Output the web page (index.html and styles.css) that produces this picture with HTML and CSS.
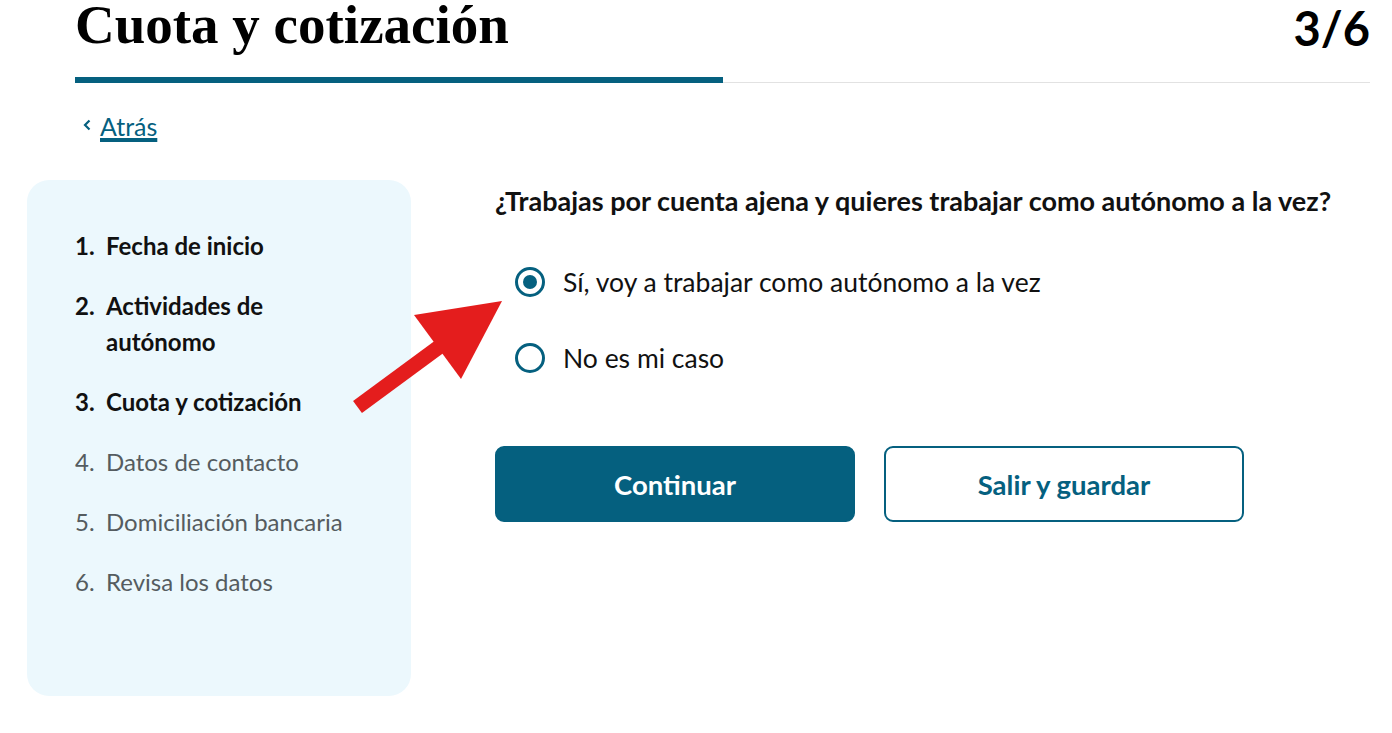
FILE: index.html
```html
<!DOCTYPE html>
<html lang="es">
<head>
    <meta charset="UTF-8">
    <meta name="viewport" content="width=device-width, initial-scale=1.0">
    <title>Cuota y cotización</title>
    <link rel="stylesheet" href="styles.css">
</head>
<body>
    <div class="page">
        <div class="heading">
            <div class="heading_row">
                <h1 class="title">Cuota y cotización</h1>
                <span class="step_count">3/6</span>
            </div>
            <div class="progress">
                <div class="progress_done"></div>
            </div>
        </div>

        <a href="#" class="back">
            <svg class="back_icon" viewBox="0 0 8 12" width="8" height="12">
                <path d="M6.5 1.5 L2 6 L6.5 10.5" fill="none" stroke="currentColor" stroke-width="2.2"/>
            </svg>
            <span>Atrás</span>
        </a>

        <div class="content">
            <div class="steps">
                <ol class="step_list">
                    <li class="step done"><span class="num">1.</span><span>Fecha de inicio</span></li>
                    <li class="step done"><span class="num">2.</span><span>Actividades de autónomo</span></li>
                    <li class="step done"><span class="num">3.</span><span>Cuota y cotización</span></li>
                    <li class="step"><span class="num">4.</span><span>Datos de contacto</span></li>
                    <li class="step"><span class="num">5.</span><span>Domiciliación bancaria</span></li>
                    <li class="step"><span class="num">6.</span><span>Revisa los datos</span></li>
                </ol>
            </div>

            <div class="form">
                <p class="question">¿Trabajas por cuenta ajena y quieres trabajar como autónomo a la vez?</p>

                <label class="option">
                    <input type="radio" name="ajena" checked>
                    <span class="radio"></span>
                    <span>Sí, voy a trabajar como autónomo a la vez</span>
                </label>
                <label class="option">
                    <input type="radio" name="ajena">
                    <span class="radio"></span>
                    <span>No es mi caso</span>
                </label>

                <div class="actions">
                    <button class="btn primary">Continuar</button>
                    <button class="btn secondary">Salir y guardar</button>
                </div>
            </div>

            <!-- red pointer arrow drawn over the page -->
            <svg class="pointer" viewBox="0 0 165 130" width="165" height="130">
                <line x1="10.5" y1="117" x2="92" y2="57" stroke="#e41d1d" stroke-width="15"/>
                <polygon points="67,25 155,11 114,89" fill="#e41d1d"/>
            </svg>
        </div>
    </div>
</body>
</html>
```

FILE: styles.css
```css
body {
    margin: 0;
    font-family: Lato, "Noto Sans", sans-serif;
    color: #111;
    background-color: #ffffff;
}

.page {
    padding: 0 22px 0 27px;
}

.heading {
    padding-left: 48px;
}

.heading_row {
    display: flex;
    justify-content: space-between;
    align-items: flex-end;
    height: 77px;
}

.title {
    margin: 0;
    margin-top: -5px;
    font-family: "Liberation Serif", serif;
    font-size: 55px;
    font-weight: bold;
    line-height: 60px;
    align-self: flex-start;
    color: #000;
}

.step_count {
    align-self: flex-start;
    margin-top: -2px;
    font-size: 47px;
    font-weight: 700;
    line-height: 60px;
    color: #000;
}

.progress {
    height: 6px;
    display: flex;
    align-items: flex-end;
}

.progress::after {
    content: "";
    flex: 1;
    height: 1px;
    background-color: #e2e2e2;
}

.progress_done {
    width: 648px;
    height: 6px;
    background-color: #05607f;
}

.back {
    display: inline-flex;
    align-items: center;
    gap: 9px;
    margin: 27px 0 0 56px;
    color: #05607f;
    font-size: 25px;
    line-height: 32px;
}

.back span {
    text-decoration: underline;
    text-underline-offset: 4px;
    text-decoration-thickness: 2px;
}

.back_icon {
    margin-top: -3px;
}

.content {
    position: relative;
    display: flex;
    gap: 84px;
    margin-top: 38px;
}

.steps {
    width: 384px;
    height: 516px;
    flex-shrink: 0;
    box-sizing: border-box;
    padding: 48px 56px 0 48px;
    background-color: #ecf8fd;
    border-radius: 22px;
}

.step_list {
    list-style: none;
    margin: 0;
    padding: 0;
    display: flex;
    flex-direction: column;
    gap: 24px;
}

.step {
    display: flex;
    font-size: 24px;
    line-height: 36px;
    color: #555c60;
}

.step .num {
    width: 31px;
    flex-shrink: 0;
}

.step.done {
    font-weight: bold;
    color: #111;
}

.form {
    flex: 1;
    padding-top: 3px;
}

.question {
    margin: 0 0 43px 0;
    font-size: 27px;
    font-weight: bold;
    line-height: 36px;
    white-space: nowrap;
}

.option {
    display: flex;
    align-items: center;
    gap: 18px;
    height: 40px;
    margin-bottom: 36px;
    font-size: 26.5px;
    cursor: pointer;
}

.option input {
    display: none;
}

.radio {
    width: 30px;
    height: 30px;
    box-sizing: border-box;
    margin-left: 20px;
    border: 3px solid #05607f;
    border-radius: 50%;
    display: flex;
    justify-content: center;
    align-items: center;
}

.option input:checked + .radio::after {
    content: "";
    width: 14px;
    height: 14px;
    border-radius: 50%;
    background-color: #05607f;
}

.actions {
    display: flex;
    gap: 29px;
    margin-top: 68px;
}

.btn {
    width: 360px;
    height: 76px;
    border-radius: 9px;
    font-family: Lato, sans-serif;
    font-size: 27.5px;
    font-weight: bold;
    cursor: pointer;
}

.primary {
    background-color: #05607f;
    border: 2px solid #05607f;
    color: #ffffff;
}

.secondary {
    background-color: #ffffff;
    border: 2px solid #05607f;
    color: #05607f;
}

.pointer {
    position: absolute;
    left: 320px;
    top: 110px;
}
```
